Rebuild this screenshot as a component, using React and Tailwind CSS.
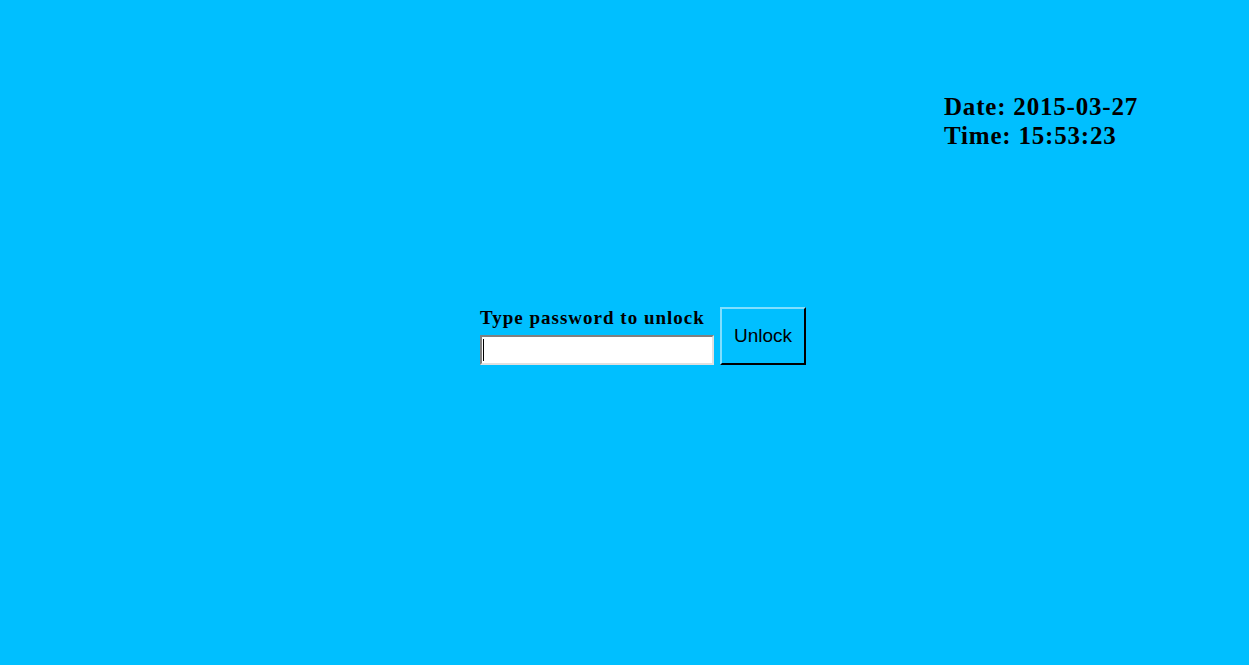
export default function App() {
  return (
    <div className="min-h-screen w-full bg-[#00bfff] text-black font-['Liberation_Serif',serif]">
      <div className="pl-[944px] pt-[92px] text-[25px] font-bold leading-[29px] tracking-[0.8px]">
        <div>Date: 2015-03-27</div>
        <div>Time: 15:53:23</div>
      </div>

      <div className="mt-[156px] flex items-end gap-[6px] pl-[480px]">
        <div className="flex flex-col">
          <label className="text-[19px] font-bold leading-[24px] mb-[5px] tracking-[1px]">Type password to unlock</label>
          <div className="relative flex h-[30px] w-[234px] items-center border-2 border-t-[#808080] border-l-[#808080] border-b-[#e0e0e0] border-r-[#e0e0e0] bg-white">
            <span className="ml-[1px] h-[22px] w-[1px] bg-black" />
            <input type="password" className="h-full flex-1 bg-transparent outline-none" />
          </div>
        </div>
        <button className="h-[58px] w-[86px] border-2 border-t-[#80dfff] border-l-[#80dfff] border-b-black border-r-black bg-[#00bfff] font-['Liberation_Sans',sans-serif] text-[19px] text-black">
          Unlock
        </button>
      </div>
    </div>
  );
}
